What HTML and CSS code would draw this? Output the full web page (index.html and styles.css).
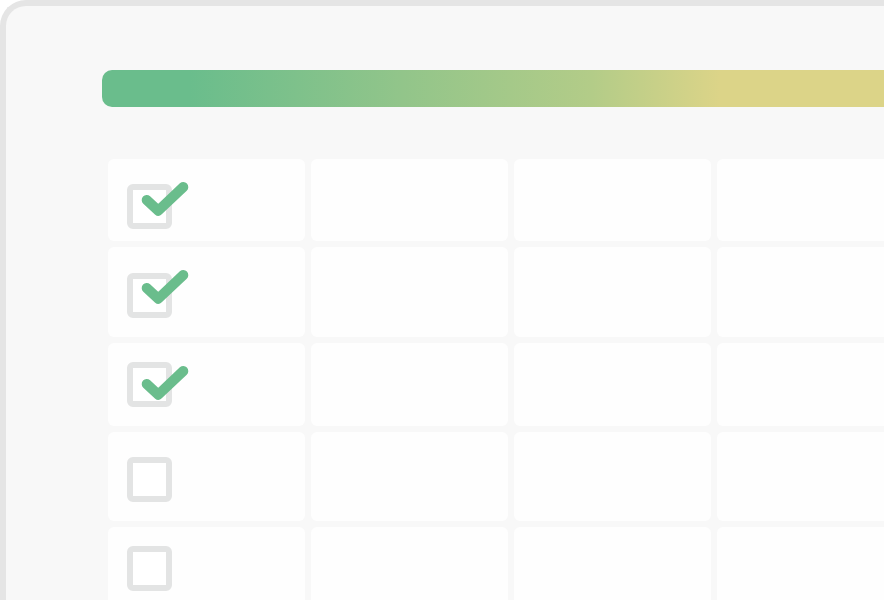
FILE: index.html
```html
<!DOCTYPE html>
<html lang="en">
<head>
<meta charset="utf-8">
<title>Checklist</title>
<link rel="stylesheet" href="styles.css">
</head>
<body>
<div class="frame">
  <div class="progress"></div>
  <div class="grid">
    <div class="cell first">
      <div class="box low"></div>
      <svg class="check" width="90" height="70" viewBox="0 0 90 70"><path d="M38.7 41 L50.3 51.7 L75.3 28" /></svg>
    </div>
    <div class="cell"></div><div class="cell"></div><div class="cell"></div>

    <div class="cell first">
      <div class="box lower"></div>
      <svg class="check" width="90" height="70" viewBox="0 0 90 70"><path d="M38.7 41 L50.3 51.7 L75.3 28" /></svg>
    </div>
    <div class="cell"></div><div class="cell"></div><div class="cell"></div>

    <div class="cell first">
      <div class="box high"></div>
      <svg class="check" width="90" height="70" viewBox="0 0 90 70"><path d="M38.7 41 L50.3 51.7 L75.3 28" /></svg>
    </div>
    <div class="cell"></div><div class="cell"></div><div class="cell"></div>

    <div class="cell first">
      <div class="box low"></div>
    </div>
    <div class="cell"></div><div class="cell"></div><div class="cell"></div>

    <div class="cell first">
      <div class="box high"></div>
    </div>
    <div class="cell"></div><div class="cell"></div><div class="cell"></div>
  </div>
</div>
</body>
</html>
```

FILE: styles.css
```css
html, body {
  margin: 0;
  padding: 0;
  background: #ffffff;
  overflow: hidden;
  width: 884px;
  height: 600px;
}

.frame {
  box-sizing: border-box;
  width: 884px;
  height: 600px;
  overflow: hidden;
  background: #f8f8f8;
  border-top: 6px solid #e5e5e5;
  border-left: 6px solid #e5e5e5;
  border-top-left-radius: 26px;
  padding: 64px 0 0 96px;
}

.progress {
  height: 37px;
  border-radius: 10px 0 0 10px;
  background: linear-gradient(90deg,
    #6abd8c 0px,
    #6abd8c 88px,
    #92c58a 300px,
    #b3cc88 490px,
    #dcd488 618px,
    #dcd488 800px);
}

.grid {
  margin: 52px 0 0 6px;
  display: grid;
  grid-template-columns: 197px 197px 197px 167px;
  grid-template-rows: 82px 90px 83px 89px 73px;
  gap: 6px;
}

.cell {
  background: #fefefe;
  border-radius: 6px;
}

.grid > .cell:nth-child(4n) {
  border-top-right-radius: 0;
  border-bottom-right-radius: 0;
}

.grid > .cell:nth-last-child(-n+4) {
  border-bottom-left-radius: 0;
  border-bottom-right-radius: 0;
}

.first {
  position: relative;
  padding-left: 19px;
}

.box {
  box-sizing: border-box;
  width: 45px;
  height: 45px;
  border: 6px solid #e3e4e4;
  border-radius: 6px;
  background: #ffffff;
}

.box.low { margin-top: 25px; }
.box.lower { margin-top: 26px; }
.box.high { margin-top: 19px; }

.check {
  position: absolute;
  left: 0;
  top: 0;
}

.check path {
  fill: none;
  stroke: #6abd8c;
  stroke-width: 10;
  stroke-linecap: round;
  stroke-linejoin: round;
}
```
